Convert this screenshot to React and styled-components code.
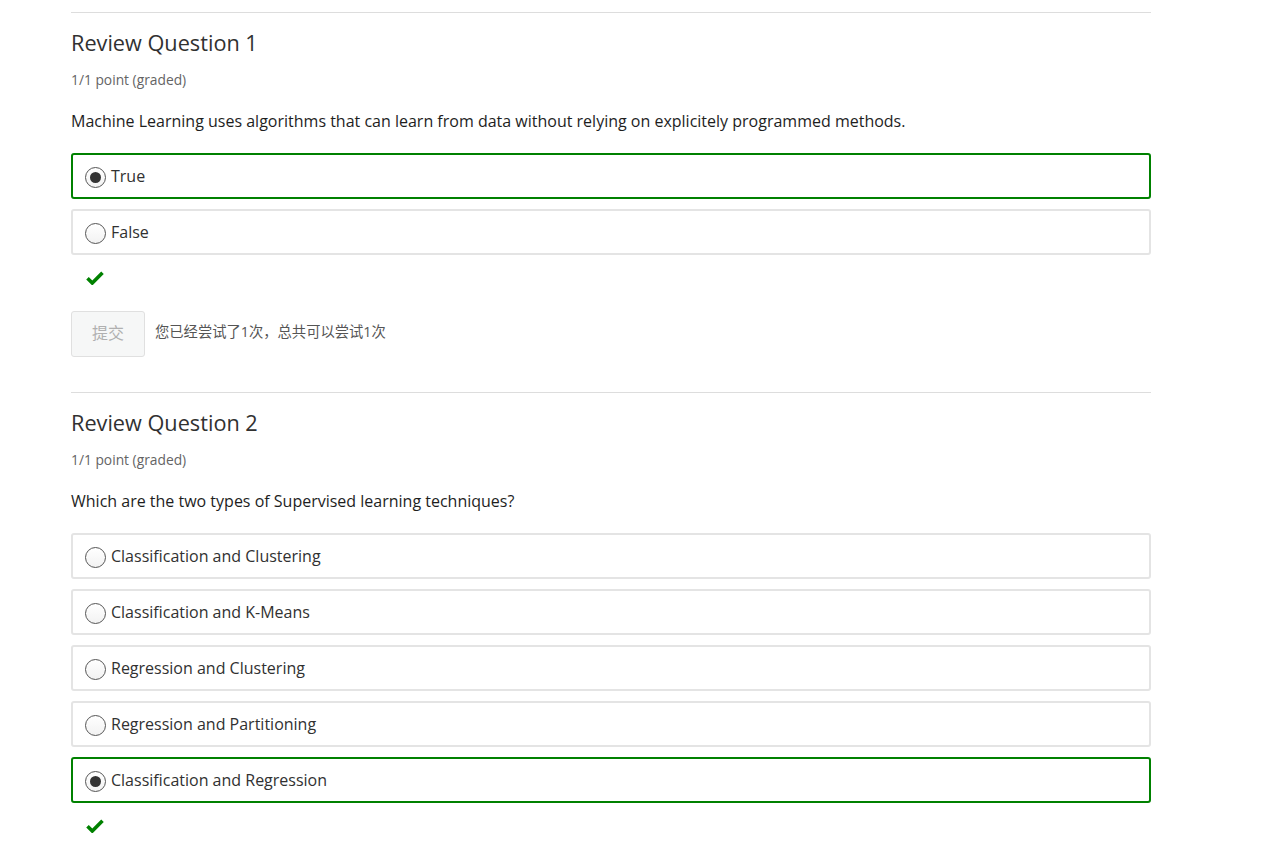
import React from 'react';
import styled, { createGlobalStyle } from 'styled-components';

const GlobalStyle = createGlobalStyle`
  body {
    margin: 0;
    background: #fff;
    font-family: "Open Sans", "Noto Sans CJK SC", sans-serif;
    color: #313131;
  }
`;

const QUESTIONS = [
  {
    title: 'Review Question 1',
    text: 'Machine Learning uses algorithms that can learn from data without relying on explicitely programmed methods.',
    options: ['True', 'False'],
    selected: 0,
    showSubmit: true,
  },
  {
    title: 'Review Question 2',
    text: 'Which are the two types of Supervised learning techniques?',
    options: [
      'Classification and Clustering',
      'Classification and K-Means',
      'Regression and Clustering',
      'Regression and Partitioning',
      'Classification and Regression',
    ],
    selected: 4,
    showSubmit: false,
  },
];

const CheckIcon = () => (
  <svg width="18" height="14" viewBox="0 0 18 14">
    <path d="M1.5 7.2 L6.3 12 L16.5 1.8" fill="none" stroke="#008100" strokeWidth="3.6" strokeLinejoin="miter" />
  </svg>
);

const Question = ({ question }) => (
  <Section>
    <Title>{question.title}</Title>
    <Points>1/1 point (graded)</Points>
    <Prompt>{question.text}</Prompt>
    <Options>
      {question.options.map((label, index) => (
        <Option key={label} isCorrect={index === question.selected}>
          <Radio isChecked={index === question.selected} />
          <OptionLabel>{label}</OptionLabel>
        </Option>
      ))}
    </Options>
    <Status>
      <CheckIcon />
    </Status>
    {question.showSubmit && (
      <SubmitRow>
        <SubmitButton disabled>提交</SubmitButton>
        <Attempts>您已经尝试了1次，总共可以尝试1次</Attempts>
      </SubmitRow>
    )}
  </Section>
);

export default function App() {
  return (
    <>
      <GlobalStyle />
      <Page>
        {QUESTIONS.map(q => (
          <Question key={q.title} question={q} />
        ))}
      </Page>
    </>
  );
}

const Page = styled.div`
  width: 1080px;
  margin-left: 71px;
  padding-top: 12px;
`;

const Section = styled.section`
  border-top: 1px solid #dddddd;
  padding-bottom: 35px;
`;

const Title = styled.h2`
  margin: 17px 0 0;
  font-size: 21.7px;
  line-height: 26px;
  font-weight: 400;
  color: #313131;
`;

const Points = styled.div`
  margin-top: 14px;
  font-size: 13.8px;
  line-height: 19px;
  color: #646464;
`;

const Prompt = styled.p`
  margin: 21px 0 0;
  font-size: 16px;
  line-height: 22px;
  color: #1e1e1e;
`;

const Options = styled.div`
  margin-top: 21px;
  display: flex;
  flex-direction: column;
  gap: 10px;
`;

const Option = styled.label`
  display: flex;
  align-items: center;
  height: 46px;
  box-sizing: border-box;
  padding-left: 12px;
  border: 2px solid ${props => (props.isCorrect ? '#008100' : '#e4e4e4')};
  border-radius: 3px;
  background: #fff;
`;

const Radio = styled.span`
  position: relative;
  width: 21px;
  height: 21px;
  margin-top: 2px;
  box-sizing: border-box;
  border-radius: 50%;
  border: 1px solid #555;
  background: linear-gradient(#fff, #f2f2f2);

  &::after {
    content: '';
    position: absolute;
    top: 50%;
    left: 50%;
    width: 11px;
    height: 11px;
    margin: -5.5px 0 0 -5.5px;
    border-radius: 50%;
    background: #333;
    opacity: ${props => (props.isChecked ? 1 : 0)};
  }
`;

const OptionLabel = styled.span`
  margin-left: 5px;
  font-size: 16px;
  color: #313131;
`;

const Status = styled.div`
  margin-top: 16px;
  padding-left: 15px;
  height: 14px;
  display: flex;
  align-items: center;
`;

const SubmitRow = styled.div`
  margin-top: 26px;
  display: flex;
  align-items: center;
  gap: 10px;
`;

const SubmitButton = styled.button`
  width: 74px;
  height: 46px;
  padding: 0 0 4px;
  border: 1px solid #e0e0e0;
  border-radius: 3px;
  background: #f6f7f7;
  color: #b0b0b0;
  font-family: "Open Sans", "Noto Sans CJK SC", sans-serif;
  font-size: 16px;
`;

const Attempts = styled.span`
  margin-top: -8px;
  font-size: 14.3px;
  color: #555;
  font-family: "Open Sans", "Noto Sans CJK SC", sans-serif;
`;
